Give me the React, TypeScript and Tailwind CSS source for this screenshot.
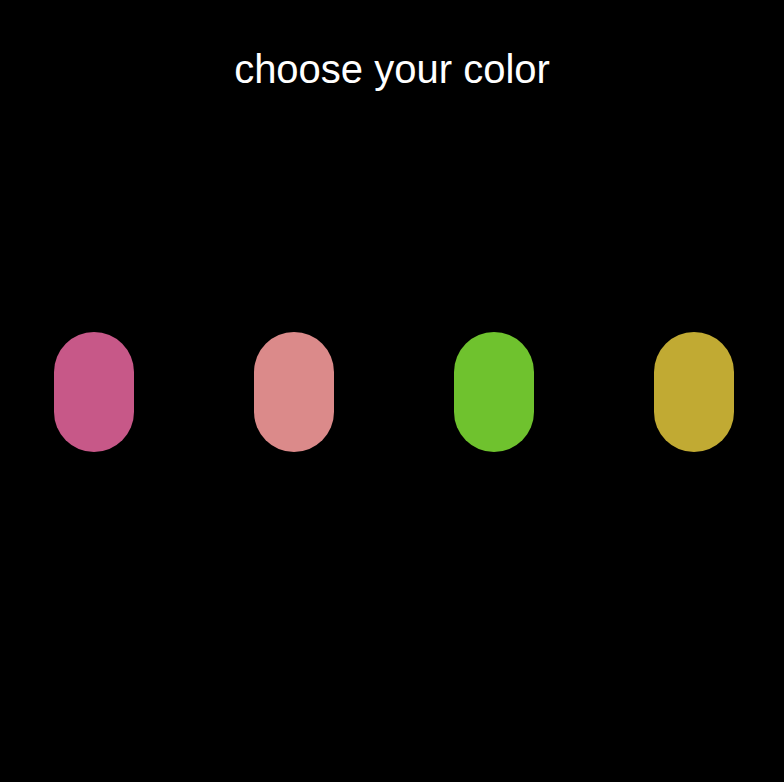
const swatches = ["#c75888", "#db8a8a", "#6fc22e", "#c1aa33"];

export default function App() {
  return (
    <div className="h-[782px] w-full bg-black font-['Liberation_Sans',Arial,sans-serif] flex flex-col">
      <h1 className="pt-[46px] text-center text-[40px] leading-[46px] text-white">
        choose your color
      </h1>
      <div className="mt-[240px] flex gap-[120px] pl-[54px]">
        {swatches.map((color) => (
          <button
            key={color}
            className="h-[120px] w-[80px] rounded-full"
            style={{ backgroundColor: color }}
          />
        ))}
      </div>
    </div>
  );
}
